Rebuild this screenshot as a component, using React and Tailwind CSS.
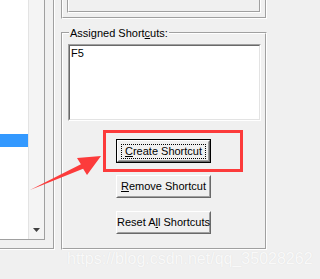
import React from 'react';

function Etched({ className = '', children }) {
  // classic win32 etched frame: gray line with a white line 1px further in/out
  return (
    <div className={`border-t border-l border-t-[#a0a0a0] border-l-[#a0a0a0] border-r border-b border-r-white border-b-white ${className}`}>
      <div className="relative h-full border-t border-l border-t-white border-l-white border-r border-b border-r-[#a0a0a0] border-b-[#a0a0a0]">
        {children}
      </div>
    </div>
  );
}

function Button({ label, u, isDefault, className = '' }) {
  const i = label.indexOf(u);
  const text = (
    <span className="whitespace-nowrap">
      {label.slice(0, i)}
      <span className="underline underline-offset-[1px]">{u}</span>
      {label.slice(i + u.length)}
    </span>
  );
  const face = (
    <div className="h-full border-t border-l border-t-white border-l-white border-r border-b border-r-[#696969] border-b-[#696969]">
      <div className="h-full border-t border-l border-t-[#f0f0f0] border-l-[#f0f0f0] border-r border-b border-r-[#a0a0a0] border-b-[#a0a0a0] bg-[#f0f0f0] flex items-center justify-center">
        {isDefault ? (
          <div className="px-[3px] h-[15px] flex items-center border border-dotted border-black">{text}</div>
        ) : (
          text
        )}
      </div>
    </div>
  );
  return (
    <div className={`w-[95px] ${isDefault ? 'h-[24px] border border-black' : 'h-[23px]'} ${className}`}>
      {face}
    </div>
  );
}

export default function App() {
  return (
    <div className="relative w-[320px] h-[279px] overflow-hidden bg-[#f0f0f0] text-black text-[11px] leading-[13px] font-['Liberation_Sans',Arial,sans-serif]">
      <div className="flex items-start">
        {/* left group with list */}
        <div className="w-[55px] h-[250px] shrink-0 border-r border-b border-white">
          <div className="h-full border-r border-b border-[#a0a0a0]">
            <div className="w-[45px] h-[240px] flex border-r border-b border-[#a0a0a0]">
              <div className="w-[28px] bg-white pt-[134px]">
                <div className="h-[13px] bg-[#3399ff]" />
              </div>
              <div className="w-[16px] bg-[#f4f4f4] border-l border-[#e3e3e3] flex flex-col justify-end items-center pb-[7px]">
                <svg width="7" height="4" viewBox="0 0 7 4">
                  <path d="M0 0h7L3.5 4z" fill="#404040" />
                </svg>
              </div>
            </div>
          </div>
        </div>

        {/* right column */}
        <div className="ml-[6px] w-[206px] shrink-0">
          <div className="h-[19px] border-l border-l-[#a0a0a0] border-r border-b border-r-white border-b-white">
            <div className="h-full border-l border-l-white border-r border-b border-r-[#a0a0a0] border-b-[#a0a0a0]">
              <div className="ml-[4px] w-[194px] h-[13px] border-l border-l-[#a0a0a0] border-r border-b border-r-white border-b-white">
                <div className="h-full border-l border-l-white border-r border-b border-r-[#a0a0a0] border-b-[#a0a0a0]" />
              </div>
            </div>
          </div>

          <Etched className="mt-[13px] h-[218px]">
            <span className="absolute left-[6px] top-[-7px] px-[1px] bg-[#f0f0f0] whitespace-nowrap">
              Assigned Short<span className="underline underline-offset-[1px]">c</span>uts:
            </span>
            <div className="ml-[5px] mt-[10px] w-[193px] h-[77px] border-t border-l border-t-[#a0a0a0] border-l-[#a0a0a0] border-r border-b border-r-white border-b-white">
              <div className="h-full border-t border-l border-t-[#696969] border-l-[#696969] border-r border-b border-r-[#e3e3e3] border-b-[#e3e3e3] bg-white pl-[1px] pt-[1px]">
                F5
              </div>
            </div>
            <div className="ml-[53px] flex flex-col">
              <Button label="Create Shortcut" u="C" isDefault className="mt-[18px]" />
              <Button label="Remove Shortcut" u="R" className="mt-[12px]" />
              <Button label="Reset All Shortcuts" u="l" className="mt-[13px]" />
            </div>
          </Etched>
        </div>
      </div>

      <div className="pl-[67px] text-[16px] leading-[18px] text-[#f9f9f9] [text-shadow:0_0_1px_#dcdcdc] whitespace-nowrap">
        https://blog.csdn.net/qq_35028262
      </div>

      {/* annotation: red box and arrow */}
      <div className="absolute left-[103px] top-[130px] w-[140px] h-[42px] border-[3px] border-[#fc3b3b]" />
      <svg className="absolute left-0 top-0" width="320" height="279" viewBox="0 0 320 279">
        <polygon points="30,190 80.9,164.2 77,158 101,156 87,175 83.1,168.8" fill="#fc3b3b" />
      </svg>
    </div>
  );
}
